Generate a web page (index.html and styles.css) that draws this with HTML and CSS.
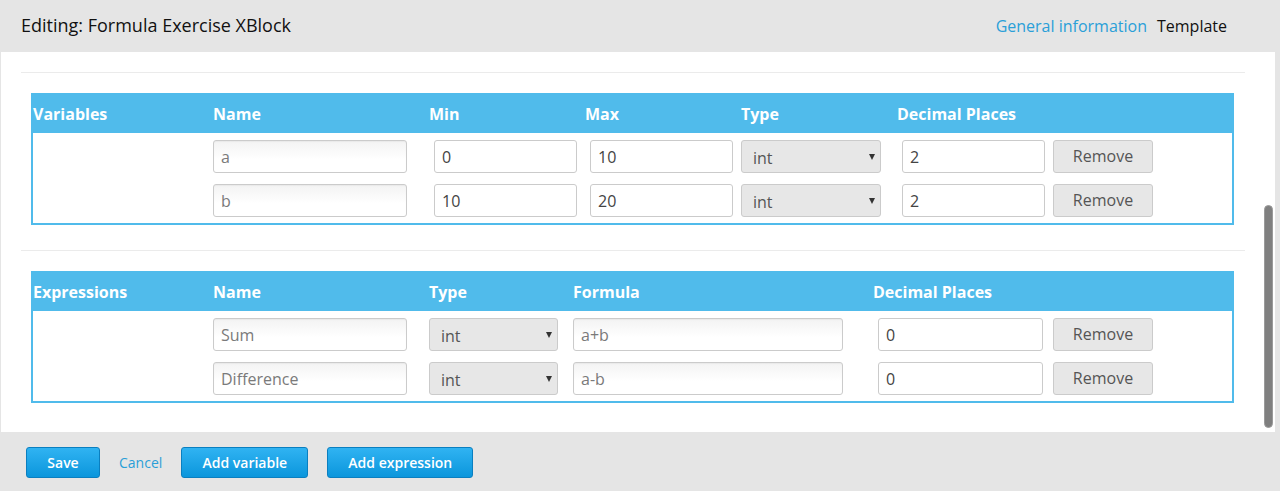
FILE: index.html
```html
<!DOCTYPE html>
<html>
<head>
<meta charset="utf-8">
<link rel="stylesheet" href="styles.css">
</head>
<body>
<div class="modal">
  <header class="topbar">
    <h1 class="title">Editing: Formula Exercise XBlock</h1>
    <nav class="tabs">
      <a class="tab link">General information</a>
      <span class="tab current">Template</span>
    </nav>
  </header>
  <main class="content">
    <hr class="sep">
    <section class="tbl vars">
      <div class="row head">
        <div>Variables</div><div>Name</div><div>Min</div><div>Max</div><div>Type</div><div>Decimal Places</div>
      </div>
      <div class="row body">
        <div></div>
        <div><span class="inp soft w-name">a</span></div>
        <div><span class="inp num w-num">0</span></div>
        <div><span class="inp num w-num">10</span></div>
        <div><span class="sel w-type">int<i class="arr"></i></span></div>
        <div class="last"><span class="inp num w-num">2</span><span class="btn-rm">Remove</span></div>
      </div>
      <div class="row body">
        <div></div>
        <div><span class="inp soft w-name">b</span></div>
        <div><span class="inp num w-num">10</span></div>
        <div><span class="inp num w-num">20</span></div>
        <div><span class="sel w-type">int<i class="arr"></i></span></div>
        <div class="last"><span class="inp num w-num">2</span><span class="btn-rm">Remove</span></div>
      </div>
    </section>
    <hr class="sep sep2">
    <section class="tbl exprs">
      <div class="row head">
        <div>Expressions</div><div>Name</div><div>Type</div><div>Formula</div><div>Decimal Places</div>
      </div>
      <div class="row body">
        <div></div>
        <div><span class="inp soft w-name">Sum</span></div>
        <div><span class="sel w-etype">int<i class="arr"></i></span></div>
        <div><span class="inp soft w-formula">a+b</span></div>
        <div class="last"><span class="inp num w-edec">0</span><span class="btn-rm">Remove</span></div>
      </div>
      <div class="row body">
        <div></div>
        <div><span class="inp soft w-name">Difference</span></div>
        <div><span class="sel w-etype">int<i class="arr"></i></span></div>
        <div><span class="inp soft w-formula">a-b</span></div>
        <div class="last"><span class="inp num w-edec">0</span><span class="btn-rm">Remove</span></div>
      </div>
    </section>
    <div class="scrollbar"><div class="thumb"></div></div>
  </main>
  <footer class="actions">
    <span class="btn-pri save">Save</span>
    <a class="cancel">Cancel</a>
    <span class="btn-pri addvar">Add variable</span>
    <span class="btn-pri addexp">Add expression</span>
  </footer>
</div>
</body>
</html>
```
FILE: styles.css
```css
* { box-sizing: border-box; }
html, body { margin: 0; padding: 0; }
body {
  font-family: "Open Sans", "Noto Sans", sans-serif;
  background: #e5e5e5;
  width: 1280px;
  height: 491px;
  overflow: hidden;
}
.modal { display: flex; flex-direction: column; height: 491px; }
.topbar {
  height: 52px;
  display: flex;
  align-items: center;
  justify-content: space-between;
  padding: 0 53px 0 21px;
  background: #e5e5e5;
}
.title {
  margin: 0;
  font-size: 18px;
  font-weight: 400;
  color: #111;
  line-height: 24px;
  padding-bottom: 2px;
}
.tabs { display: flex; gap: 10px; font-size: 16px; line-height: 22px; }
.tab.link { color: #2a9fd8; }
.tab.current { color: #111; }

.content {
  position: relative;
  height: 380px;
  margin: 0 5px 0 1px;
  background: #fff;
  padding: 20px 30px 0 20px;
}
.sep { border: 0; border-top: 1px solid #ebebeb; margin: 0 0 20px 0; }
.sep2 { margin-top: 25px; }

.tbl {
  margin-left: 10px;
  width: 1203px;
  border: 2px solid #50bbeb;
  padding-bottom: 6px;
}
.row { display: grid; }
.vars .row { grid-template-columns: 180px 216px 156px 156px 156px 1fr; }
.exprs .row { grid-template-columns: 180px 216px 144px 300px 1fr; }
.row.head {
  background: #50bbeb;
  color: #fff;
  font-weight: 700;
  font-size: 16px;
  height: 40px;
  line-height: 38px;
  margin-top: -2px;
  padding-top: 2px;
}
.row.head > div { white-space: nowrap; }
.row.body { margin-top: 7px; }
.row.body + .row.body { margin-top: 11px; }
.row.body > div { display: flex; align-items: center; }
.vars .last { gap: 8px; }
.exprs .last { gap: 10px; }

.inp, .sel, .btn-rm {
  display: block;
  height: 33px;
  border: 1px solid #cbcbcb;
  border-radius: 3px;
  font-size: 16px;
  line-height: 32px;
  padding: 0 7px;
  color: #555;
}
.inp.soft {
  color: #7a7a7a;
  background: linear-gradient(#f3f3f3, #fff 60%);
  box-shadow: inset 0 1px 1px rgba(0,0,0,0.04);
}
.inp.num { background: #fff; color: #444; margin-left: 5px; }
.sel {
  position: relative;
  background: #e7e7e7;
  padding-left: 11px;
  line-height: 35px;
  color: #555;
}
.arr {
  position: absolute;
  right: 5px;
  top: 13px;
  width: 0; height: 0;
  border-left: 3px solid transparent;
  border-right: 3px solid transparent;
  border-top: 6px solid #333;
}
.w-name { width: 194px; }
.w-num { width: 143px; }
.w-type { width: 140px; }
.w-etype { width: 129px; }
.w-formula { width: 270px; }
.w-edec { width: 165px; margin-left: 5px; }
.btn-rm {
  width: 100px;
  background: #e7e7e7;
  text-align: center;
  font-size: 16px;
  padding: 0;
  line-height: 30px;
  color: #555;
}

.scrollbar {
  position: absolute;
  right: 0;
  top: 0;
  width: 11px;
  height: 380px;
  background: #fff;
}
.thumb {
  position: absolute;
  left: 0;
  top: 153px;
  width: 9px;
  height: 223px;
  border-radius: 5px;
  background: #7f7f7f;
  border: 1px solid #9a9a9a;
}

.actions {
  flex: 1;
  display: flex;
  align-items: center;
  padding: 2px 0 0 26px;
  background: #e5e5e5;
}
.btn-pri {
  display: block;
  height: 31px;
  line-height: 29px;
  border: 1px solid #0a7fc0;
  border-radius: 3px;
  background: linear-gradient(#30b3f2, #0b96dc);
  color: #fff;
  font-weight: 600;
  font-size: 14px;
  text-align: center;
}
.save { width: 74px; }
.cancel { color: #2a9fd8; font-size: 14px; margin: 0 19px 0 19px; }
.addvar { width: 127px; }
.addexp { width: 146px; margin-left: 19px; }
```
